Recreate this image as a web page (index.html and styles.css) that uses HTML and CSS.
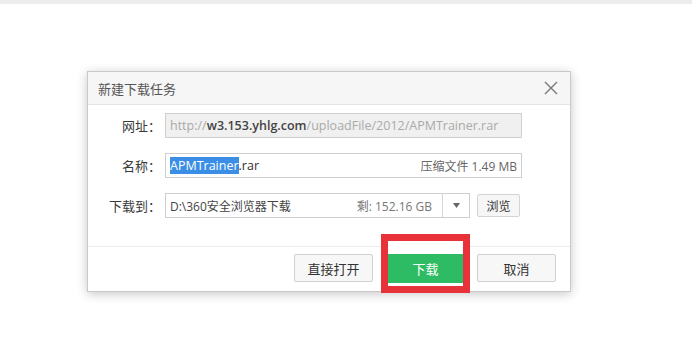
FILE: index.html
```html
<!DOCTYPE html>
<html>
<head>
<meta charset="utf-8">
<link rel="stylesheet" href="styles.css">
</head>
<body>
<div class="topstrip"></div>
<div class="stage">
  <div class="dialog">
    <div class="titlebar">
      <span class="title">新建下载任务</span>
      <svg class="close" width="14" height="14" viewBox="0 0 14 14"><path d="M1 1L13 13M13 1L1 13" stroke="#777" stroke-width="1.4" fill="none"/></svg>
    </div>
    <div class="body">
      <div class="row">
        <span class="label">网址：</span>
        <div class="field url"><span class="dim">http://</span><span class="host">w3.153.yhlg.com</span><span class="dim">/uploadFile/2012/APMTrainer.rar</span></div>
      </div>
      <div class="row">
        <span class="label">名称：</span>
        <div class="field name"><span class="sel">APMTrainer</span><span>.rar</span><span class="info">压缩文件 1.49 MB</span></div>
      </div>
      <div class="row">
        <span class="label">下载到：</span>
        <div class="field path"><span class="ptext">D:\360安全浏览器下载</span><span class="free">剩: 152.16 GB</span><span class="drop"><svg width="7" height="5" viewBox="0 0 7 5"><path d="M0 0H7L3.5 5Z" fill="#666"/></svg></span></div>
        <button class="browse">浏览</button>
      </div>
    </div>
    <div class="footer">
      <button class="btn">直接打开</button>
      <div class="highlight"><button class="btn green">下载</button></div>
      <button class="btn">取消</button>
    </div>
  </div>
</div>
</body>
</html>
```
FILE: styles.css
```css
html, body { margin: 0; padding: 0; background: #fff; }
body { width: 692px; height: 358px; overflow: hidden; font-family: "Noto Sans CJK SC", "Liberation Sans", sans-serif; }
.topstrip { height: 4px; background: #ececec; }
.stage { padding: 67px 0 0 87px; }
.dialog {
  width: 484px; height: 221px; border: 1px solid #c9c9c9; background: #fff;
  box-shadow: 0 2px 10px rgba(0,0,0,0.22); display: flex; flex-direction: column; box-sizing: border-box;
}
.titlebar {
  height: 32px; flex: none; background: #f6f6f6; border-bottom: 1px solid #e4e4e4;
  display: flex; align-items: center; justify-content: space-between; padding: 0 12px 0 10px;
}
.title { font-size: 13px; color: #555; }
.close { display: block; }
.body { padding: 8px 0 0 0; display: flex; flex-direction: column; gap: 15px; height: 142px; flex: none; box-sizing: border-box; border-bottom: 1px solid #ececec; }
.row { display: flex; align-items: center; height: 25px; }
.label { width: 73px; text-align: right; font-size: 13px; color: #3a3a3a; flex: none; }
.field {
  height: 25px; box-sizing: border-box; border: 1px solid #cfcfcf; display: flex; align-items: center;
  padding: 0 4px; font-family: "Open Sans", "Noto Sans CJK SC", sans-serif; font-size: 12.5px; color: #333; margin-left: 4px;
}
.url { width: 357px; background: #f0f0f0; white-space: nowrap; overflow: hidden; }
.dim { color: #aaa; }
.host { color: #444; font-weight: 600; }
.name { width: 357px; }
.sel { background: #3a8ee6; color: #fff; }
.info { margin-left: auto; color: #666; font-size: 12px; }
.path { width: 305px; padding-right: 0; }
.ptext { font-size: 12px; color: #444; }
.free { margin-left: auto; color: #777; font-size: 12px; padding-right: 10px; }
.drop { width: 26px; height: 23px; border-left: 1px solid #d6d6d6; display: flex; align-items: center; justify-content: center; }
.browse {
  margin-left: 7px; width: 43px; height: 23px; border: 1px solid #d4d4d4; background: #f6f6f6; border-radius: 2px;
  font-family: "Noto Sans CJK SC", sans-serif; font-size: 12px; color: #333; padding: 0;
}
.footer { flex: 1; display: flex; align-items: flex-start; justify-content: flex-end; padding: 7px 14px 0 0; }
.btn {
  width: 79px; height: 28px; border: 1px solid #d0d0d0; background: #f7f7f7; border-radius: 2px;
  font-family: "Noto Sans CJK SC", sans-serif; font-size: 13px; color: #333; padding: 0; flex: none;
}
.highlight {
  border: 7px solid #e8323a; padding: 13px 0 3px 0; background: #fff; margin: -20px 7px 0 8px;
  display: flex; position: relative;
}
.green { background: #2dbb63; border-color: #2dbb63; color: #fff; width: 75px; height: 29px; border-radius: 0; }
```
